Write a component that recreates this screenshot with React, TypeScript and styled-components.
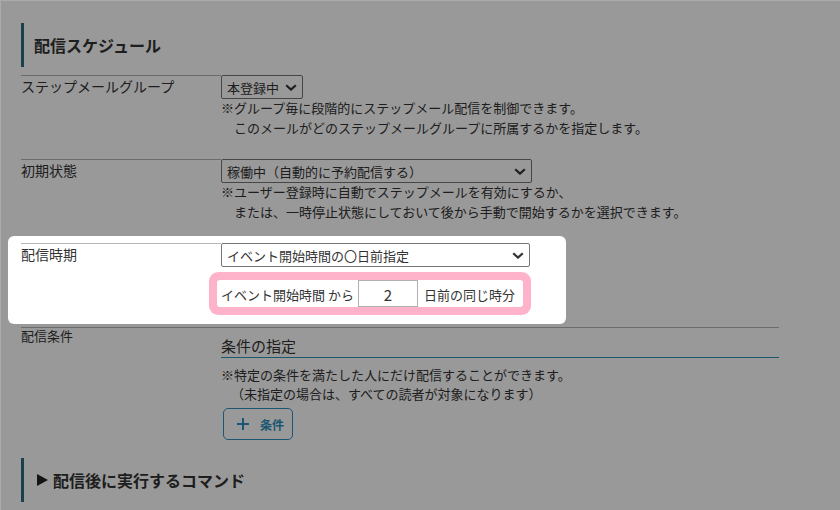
import styled, { createGlobalStyle } from "styled-components";

const GlobalStyle = createGlobalStyle`
  html, body {
    margin: 0;
    padding: 0;
  }
  body {
    background: #ababab;
    font-family: "Noto Sans CJK JP", "Noto Sans", sans-serif;
    color: #333;
  }
`;

const Frame = styled.div`
  margin: 1px 0 0 1px;
  height: 509px;
  overflow: hidden;
  background: #fff;
  padding: 22px 0 0 20px;
  box-sizing: border-box;
`;

const Content = styled.div`
  width: 758px;
`;

const Heading = styled.h2<{ $top?: number }>`
  margin: ${(p) => p.$top ?? 0}px 0 0;
  height: 44px;
  border-left: 3px solid #2d6b7a;
  padding-left: 10px;
  display: flex;
  align-items: center;
  gap: 5px;
  font-size: 16px;
  font-weight: 700;
  color: #333;
`;

const Toggle = styled.svg`
  margin-left: 3px;
  flex: none;
`;

const Rows = styled.div`
  margin-top: 8px;
`;

const Row = styled.div<{ $full?: boolean; $pad?: number }>`
  display: grid;
  grid-template-columns: 200px 1fr;
  padding-bottom: ${(p) => p.$pad ?? 21}px;
  border-top: ${(p) => (p.$full ? "1px solid #b5b5b5" : "none")};
`;

const Label = styled.div<{ $full?: boolean; $size?: number }>`
  border-top: ${(p) => (p.$full ? "none" : "1px solid #b5b5b5")};
  font-size: ${(p) => p.$size ?? 14}px;
  line-height: ${(p) => (p.$size ? 16 : 20)}px;
`;

const Control = styled.div`
  display: flex;
  flex-direction: column;
  align-items: flex-start;
`;

const Select = styled.div<{ $width?: number }>`
  display: flex;
  align-items: center;
  justify-content: space-between;
  gap: 6px;
  width: ${(p) => (p.$width ? `${p.$width}px` : "max-content")};
  height: 24px;
  box-sizing: border-box;
  padding: 0 5px;
  border: 1px solid #767676;
  border-radius: 2px;
  background: #fff;
  font-size: 13px;
  color: #333;
`;

const Notes = styled.div<{ $top?: number; $line?: number }>`
  margin-top: ${(p) => p.$top ?? -1}px;
  font-size: 13px;
  line-height: ${(p) => p.$line ?? 20}px;
`;

const NoteLine = styled.div<{ $indent?: number }>`
  padding-left: ${(p) => p.$indent ?? 0}px;
  white-space: nowrap;
`;

const Spotlight = styled.div`
  position: relative;
  z-index: 1;
  width: 532px;
  margin: -7px 0 3px -13px;
  padding: 7px 13px 17px;
  background: #fff;
  border-radius: 6px;
  box-shadow: 0 0 0 2000px rgba(0, 0, 0, 0.4);
`;

const InputGroup = styled.div`
  display: flex;
  align-items: stretch;
  height: 27px;
  margin: 13px 0 0 -4px;
  border-radius: 3px;
  background: #fff;
  box-shadow: 0 0 0 8px #ffb3ca;
`;

const Addon = styled.span<{ $left: number; $right: number }>`
  display: flex;
  align-items: center;
  padding: 1px ${(p) => p.$right}px 0 ${(p) => p.$left}px;
  font-size: 13px;
  white-space: nowrap;
`;

const NumberBox = styled.input`
  width: 60px;
  box-sizing: border-box;
  border: 1px solid #b0b0b0;
  padding: 1px 0 0;
  text-align: center;
  font-family: "Noto Sans CJK JP", "Noto Sans", sans-serif;
  font-size: 15px;
  color: #333;
  outline: none;
`;

const SubTitle = styled.div`
  align-self: stretch;
  margin-top: 7px;
  font-size: 15px;
  line-height: 22px;
  border-bottom: 1px solid #3293bb;
`;

const AddButton = styled.button`
  display: flex;
  align-items: center;
  gap: 11px;
  width: 70px;
  height: 32px;
  margin: 5px 0 0 2px;
  padding: 0 0 0 13px;
  box-sizing: border-box;
  border: 1px solid #2f8fc0;
  border-radius: 5px;
  background: #fff;
  color: #2f8fc0;
  font-family: "Noto Sans CJK JP", "Noto Sans", sans-serif;
  font-size: 12px;
  font-weight: 700;
`;

function Chevron() {
  return (
    <svg width="12" height="7" viewBox="0 0 12 7">
      <path d="M1.2 1.2 L6 5.6 L10.8 1.2" fill="none" stroke="#333" strokeWidth="2.2" />
    </svg>
  );
}

function Plus() {
  return (
    <svg width="12" height="12" viewBox="0 0 12 12">
      <path d="M6 0 V12 M0 6 H12" stroke="#2f8fc0" strokeWidth="2" />
    </svg>
  );
}

export default function App() {
  return (
    <>
      <GlobalStyle />
      <Frame>
        <Content>
          <Heading>配信スケジュール</Heading>
          <Rows>
            <Row>
              <Label>ステップメールグループ</Label>
              <Control>
                <Select>
                  本登録中
                  <Chevron />
                </Select>
                <Notes>
                  <NoteLine>※グループ毎に段階的にステップメール配信を制御できます。</NoteLine>
                  <NoteLine>　このメールがどのステップメールグループに所属するかを指定します。</NoteLine>
                </Notes>
              </Control>
            </Row>
            <Row>
              <Label>初期状態</Label>
              <Control>
                <Select $width={311}>
                  稼働中（自動的に予約配信する）
                  <Chevron />
                </Select>
                <Notes>
                  <NoteLine>※ユーザー登録時に自動でステップメールを有効にするか、</NoteLine>
                  <NoteLine>　または、一時停止状態にしておいて後から手動で開始するかを選択できます。</NoteLine>
                </Notes>
              </Control>
            </Row>
            <Spotlight>
              <Row $pad={0}>
                <Label>配信時期</Label>
                <Control>
                  <Select $width={309}>
                    イベント開始時間の〇日前指定
                    <Chevron />
                  </Select>
                  <InputGroup>
                    <Addon $left={4} $right={4}>イベント開始時間 から</Addon>
                    <NumberBox type="text" defaultValue="2" />
                    <Addon $left={6} $right={8}>日前の同じ時分</Addon>
                  </InputGroup>
                </Control>
              </Row>
            </Spotlight>
            <Row $full $pad={0}>
              <Label $full $size={13}>配信条件</Label>
              <Control>
                <SubTitle>条件の指定</SubTitle>
                <Notes $top={7} $line={19}>
                  <NoteLine>※特定の条件を満たした人にだけ配信することができます。</NoteLine>
                  <NoteLine $indent={10}>（未指定の場合は、すべての読者が対象になります）</NoteLine>
                </Notes>
                <AddButton type="button">
                  <Plus />
                  条件
                </AddButton>
              </Control>
            </Row>
          </Rows>
          <Heading $top={18}>
            <Toggle width="11" height="12" viewBox="0 0 11 12">
              <path d="M0 0 L11 6 L0 12 Z" fill="#222" />
            </Toggle>
            配信後に実行するコマンド
          </Heading>
        </Content>
      </Frame>
    </>
  );
}
